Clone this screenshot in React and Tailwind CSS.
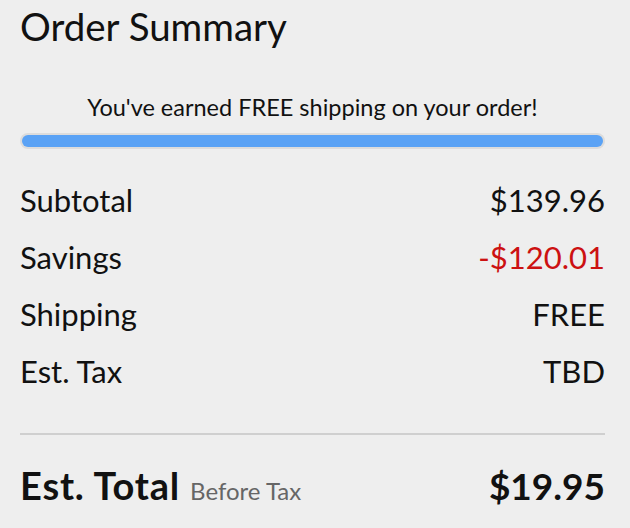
export default function App() {
  const rows = [
    { label: "Subtotal", value: "$139.96" },
    { label: "Savings", value: "-$120.01", red: true },
    { label: "Shipping", value: "FREE" },
    { label: "Est. Tax", value: "TBD" },
  ];

  return (
    <div
      className="w-[630px] h-[528px] bg-[#eeeeee] pl-[20px] pr-[25px] pt-[3px] text-[#111111] overflow-hidden"
      style={{ fontFamily: "Lato, 'Open Sans', sans-serif" }}
    >
      {/* Header */}
      <h1 className="text-[38.5px] leading-[47px] font-normal">Order Summary</h1>

      {/* Free shipping progress */}
      <p className="mt-[43px] text-center text-[23.5px] leading-[29px]">
        You've earned FREE shipping on your order!
      </p>
      <div className="mt-[11px] h-[16px] rounded-full bg-[#dcdcdc] p-[2px]">
        <div className="h-full w-full rounded-full bg-[#5aa2f5]" />
      </div>

      {/* Line items */}
      <div className="mt-[23px]">
        {rows.map((r) => (
          <div key={r.label} className="flex justify-between text-[31px] leading-[57px]">
            <span>{r.label}</span>
            <span className={r.red ? "text-[#cc1111]" : ""}>{r.value}</span>
          </div>
        ))}
      </div>

      <div className="mt-[33px] h-[2px] bg-[#cfcfcf]" />

      {/* Total */}
      <div className="mt-[28px] flex justify-between items-baseline leading-[44px]">
        <div className="flex items-baseline gap-[10px]">
          <span className="text-[38px] font-bold tracking-[0.8px]">Est. Total</span>
          <span className="text-[24px] text-[#666666]">Before Tax</span>
        </div>
        <span className="text-[37px] font-bold">$19.95</span>
      </div>
    </div>
  );
}
